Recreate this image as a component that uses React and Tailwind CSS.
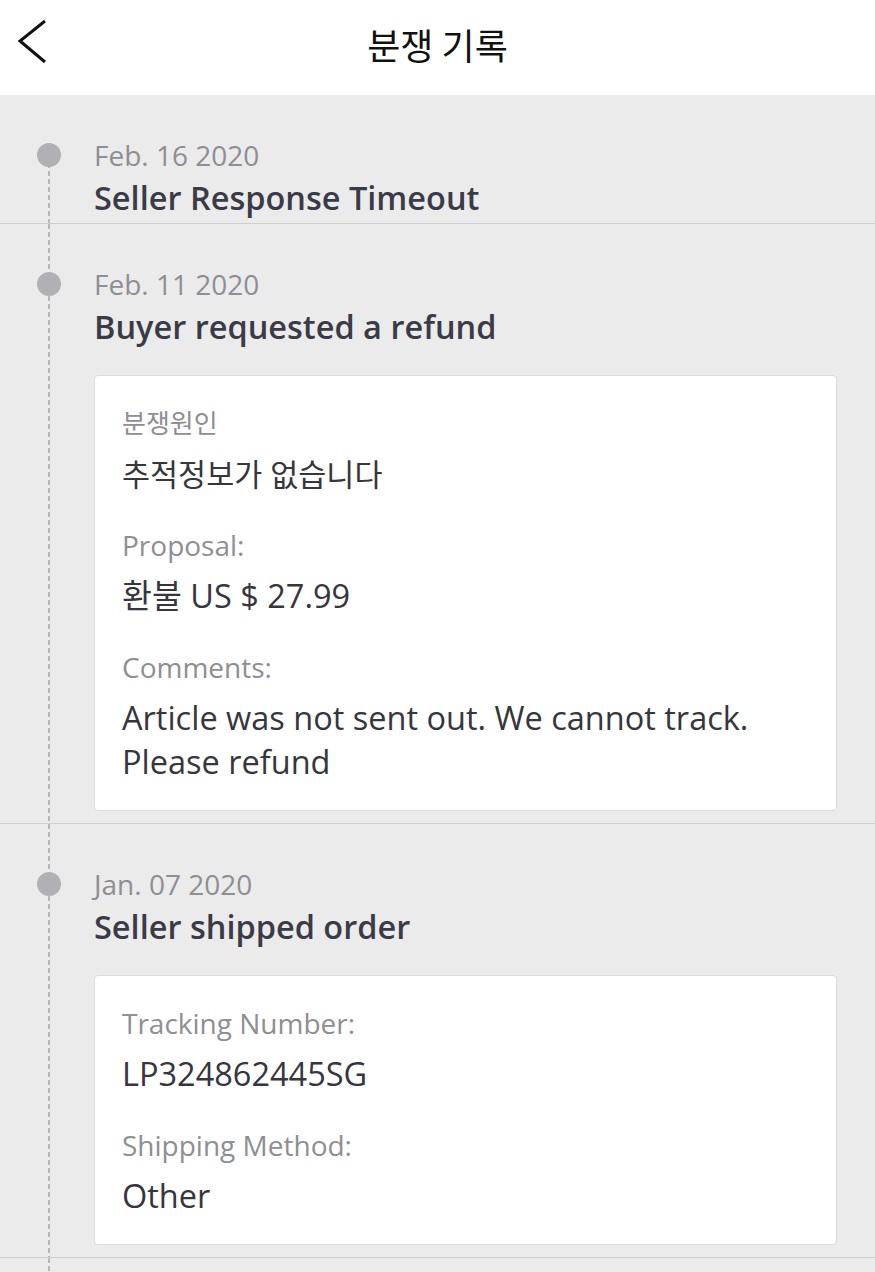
import React from "react";

const font = { fontFamily: '"Open Sans", "Noto Sans CJK KR", sans-serif' };

const events = [
  {
    date: "Feb. 16 2020",
    title: "Seller Response Timeout",
    first: true,
  },
  {
    date: "Feb. 11 2020",
    title: "Buyer requested a refund",
    fields: [
      { label: "분쟁원인", value: "추적정보가 없습니다", ko: true },
      { label: "Proposal:", value: "환불 US $ 27.99" },
      { label: "Comments:", value: "Article was not sent out. We cannot track. Please refund" },
    ],
  },
  {
    date: "Jan. 07 2020",
    title: "Seller shipped order",
    fields: [
      { label: "Tracking Number:", value: "LP324862445SG" },
      { label: "Shipping Method:", value: "Other" },
    ],
  },
];

const Event = ({ ev }) => (
  <div className="flex border-b border-[#cfcfcf]">
    <div className="relative w-[94px] shrink-0">
      <div
        className={`absolute left-[48px] w-[2px] bottom-0 bg-[linear-gradient(to_bottom,#b8b8bc_60%,transparent_60%)] bg-[length:2px_8px] ${
          ev.first ? "top-[60px]" : "top-0"
        }`}
      />
      <div className="absolute left-[37px] top-[48px] w-6 h-6 rounded-full bg-[#b0b0b5]" />
    </div>
    <div className={`flex-1 pr-[38px] pt-[42px] ${ev.fields ? "pb-[12px]" : "pb-[3px]"}`}>
      <div className="text-[28px] leading-[36px] text-[#8e8e93]">{ev.date}</div>
      <div className="mt-[3px] text-[32.5px] leading-[44px] font-semibold text-[#3a3b46]">{ev.title}</div>
      {ev.fields && (
        <div className="mt-[26px] bg-white border border-[#dcdcdc] rounded-[4px] px-[27px] pt-[29px] pb-[26px] flex flex-col gap-[31px]">
          {ev.fields.map((f) => (
            <div key={f.label} className="flex flex-col gap-[11px]">
              <div className={`${f.ko ? "text-[26px]" : "text-[28px]"} leading-[36px] text-[#8e8e93]`}>{f.label}</div>
              <div className={`${f.ko ? "text-[30.5px]" : "text-[32.5px]"} leading-[44px] text-[#36363c]`}>{f.value}</div>
            </div>
          ))}
        </div>
      )}
    </div>
  </div>
);

export default function App() {
  return (
    <div className="min-h-screen bg-[#ebebeb]" style={font}>
      <div className="relative h-[95px] bg-white flex items-center justify-center">
        <svg className="absolute left-[16px] top-[19px]" width="32" height="46" viewBox="0 0 32 46">
          <polyline points="29,2 4,22 29,43" fill="none" stroke="#111" strokeWidth="3" />
        </svg>
        <div className="text-[36px] text-[#111] -mt-[8px]" style={{ fontFamily: '"Noto Sans CJK KR", sans-serif' }}>
          분쟁 기록
        </div>
      </div>
      {events.map((ev) => (
        <Event key={ev.date} ev={ev} />
      ))}
      <div className="relative h-[40px]">
        <div className="absolute left-[48px] w-[2px] top-0 bottom-0 bg-[linear-gradient(to_bottom,#b8b8bc_60%,transparent_60%)] bg-[length:2px_8px]" />
      </div>
    </div>
  );
}
